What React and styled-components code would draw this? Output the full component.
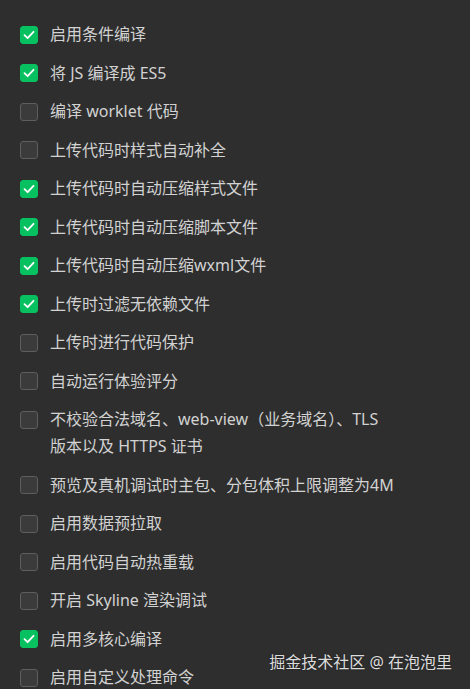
import React from 'react';
import styled, { createGlobalStyle } from 'styled-components';

const options = [
  { label: '启用条件编译', checked: true },
  { label: '将 JS 编译成 ES5', checked: true },
  { label: '编译 worklet 代码', checked: false },
  { label: '上传代码时样式自动补全', checked: false },
  { label: '上传代码时自动压缩样式文件', checked: true },
  { label: '上传代码时自动压缩脚本文件', checked: true },
  { label: '上传代码时自动压缩wxml文件', checked: true },
  { label: '上传时过滤无依赖文件', checked: true },
  { label: '上传时进行代码保护', checked: false },
  { label: '自动运行体验评分', checked: false },
  { label: ['不校验合法域名、web-view（业务域名）、TLS', '版本以及 HTTPS 证书'], checked: false },
  { label: '预览及真机调试时主包、分包体积上限调整为4M', checked: false },
  { label: '启用数据预拉取', checked: false },
  { label: '启用代码自动热重载', checked: false },
  { label: '开启 Skyline 渲染调试', checked: false },
  { label: '启用多核心编译', checked: true },
  { label: '启用自定义处理命令', checked: false },
];

const Check = () => (
  <svg width="12" height="10" viewBox="0 0 12 10" fill="none">
    <path d="M1.5 5.2 L4.6 8.2 L10.5 1.8" stroke="#fff" strokeWidth="1.8" strokeLinecap="round" strokeLinejoin="round" />
  </svg>
);

const App = () => (
  <>
    <GlobalStyle />
    <Panel>
      <List>
        {options.map((opt, i) => (
          <Row key={i}>
            <Box $checked={opt.checked}>{opt.checked && <Check />}</Box>
            <Label>
              {Array.isArray(opt.label)
                ? opt.label.map((line) => <div key={line}>{line}</div>)
                : opt.label}
            </Label>
          </Row>
        ))}
      </List>
      <Watermark>掘金技术社区 @ 在泡泡里</Watermark>
    </Panel>
  </>
);

const GlobalStyle = createGlobalStyle`
  html, body {
    margin: 0;
    background: #2e2e2e;
  }
  body {
    font-family: "Noto Sans", "Noto Sans CJK SC", sans-serif;
  }
`;

const Panel = styled.div`
  position: relative;
  width: 470px;
  height: 689px;
  overflow: hidden;
  background: #2e2e2e;
  box-sizing: border-box;
  padding: 21px 20px 0 20px;
`;

const List = styled.div`
  display: flex;
  flex-direction: column;
  gap: 11.5px;
`;

const Row = styled.div`
  display: flex;
  align-items: flex-start;
  gap: 12px;
`;

const Box = styled.div`
  flex: none;
  width: 18px;
  height: 18px;
  margin-top: 4.5px;
  box-sizing: border-box;
  border-radius: 3px;
  display: flex;
  align-items: center;
  justify-content: center;
  background: ${(p) => (p.$checked ? '#07c160' : '#3b3b3b')};
  border: 1px solid ${(p) => (p.$checked ? '#07c160' : '#5e5e5e')};
`;

const Label = styled.div`
  font-size: 16px;
  line-height: 27px;
  color: #d2d2d2;
`;

const Watermark = styled.div`
  position: absolute;
  right: 18px;
  bottom: 17px;
  font-size: 16px;
  line-height: 20px;
  color: #dcdcdc;
  text-shadow: 0 0 2px rgba(0, 0, 0, 0.4);
`;

export default App;
